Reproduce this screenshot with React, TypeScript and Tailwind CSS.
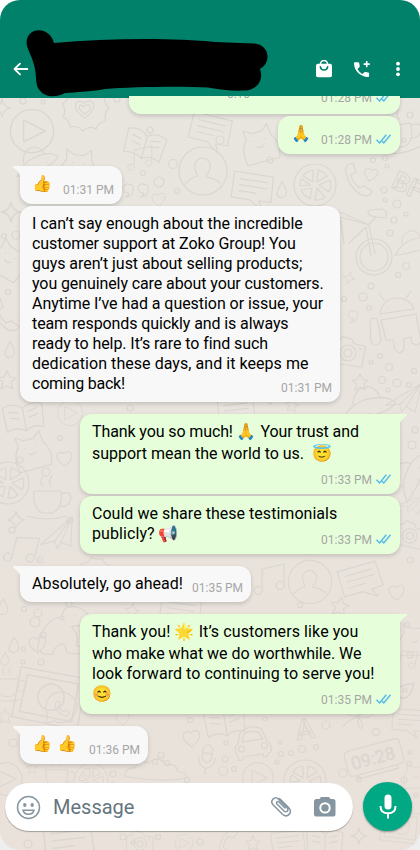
import React from "react";

const LINE = "#dbd6d0";

const bubbles: [number, number, number][] = [
  [23, 101, 3], [43, 102, 2], [117, 99, 3], [16, 235, 4], [4, 236, 2.5], [8, 292, 2.5], [143, 173, 2.5],
  [173, 164, 4.5], [159, 182, 5], [177, 191, 2.5], [410, 115, 3], [404, 140, 2], [373, 160, 2.5],
  [385, 158, 2.5], [387, 166, 2], [384, 190, 3], [385, 200, 2], [397, 204, 4], [394, 220, 3], [406, 214, 2],
  [390, 233, 3], [406, 266, 3.5], [398, 275, 2.5], [371, 286, 3], [363, 297, 4], [344, 299, 2.5], [369, 308, 2.5],
  [380, 356, 2.5], [371, 362, 2], [389, 367, 3.5], [414, 371, 2.5], [382, 380, 3.5], [397, 383, 4], [409, 385, 2.5],
  [388, 390, 2], [20, 460, 3], [46, 472, 4], [60, 438, 2.5], [12, 530, 3], [70, 520, 3], [40, 560, 2.5],
  [35, 622, 5], [24, 609, 2.5], [38, 613, 4], [43, 635, 3], [23, 649, 2], [23, 662, 2], [41, 662, 3], [62, 618, 2],
  [69, 604, 3], [407, 625, 2.5], [410, 655, 3], [405, 690, 2], [13, 743, 4], [113, 774, 3], [113, 784, 2],
  [155, 762, 2.5], [161, 755, 3], [167, 763, 2.5], [187, 780, 2.5], [123, 837, 3], [133, 842, 2], [158, 837, 2.5], [28, 844, 4],
  [200, 842, 3], [404, 780, 3], [416, 795, 2], [190, 720, 2.5], [226, 743, 2], [225, 759, 3], [223, 771, 4.5], [234, 769, 2.5],
  [265, 719, 2], [280, 742, 2], [281, 754, 2.5], [291, 753, 2.5], [302, 749, 3.5], [316, 747, 2.5], [277, 762, 2],
  [326, 725, 4], [376, 732, 3.5], [343, 773, 4], [359, 779, 2.5], [410, 752, 2], [409, 764, 2.5], [270, 402, 2], [130, 408, 3],
  [415, 430, 3], [412, 445, 4], [410, 560, 3], [300, 605, 2.5], [270, 160, 3], [150, 130, 3], [220, 140, 4],
];

type Doodle = [string, number, number, number, number];

const shapes: Record<string, string> = {
  heart: "M0 8C-14 -1 -9 -11 -1 -6C7 -13 13 -3 0 8Z",
  star: "M0 -9L3 -3L9 -2L4 2L6 9L0 6L-6 9L-4 2L-9 -2L-3 -3Z",
  sparkle: "M0 -9Q1 -1 9 0Q1 1 0 9Q-1 1 -9 0Q-1 -1 0 -9Z",
  drop: "M0 -8C4 -2 6 1 4 5C1 9 -4 8 -5 4C-5 1 -3 -3 0 -8Z",
  phone: "M-9 -16C-15 -14 -12 0 -4 9C4 18 13 17 14 11L6 6L1 8Q-6 1 -7 -5L-2 -8L-5 -17Z",
  quote: "M3 -6A5 5 0 1 0 2 3Q2 6 -2 8Q8 7 7 -3Q6 -7 3 -6Z",
  robot: "M-18 -9Q-16 -24 -2 -25Q12 -25 16 -14ZM-14 -23L-19 -30M8 -25L13 -32M-17 -3L18 -9L23 18Q20 25 14 20L13 14L6 16L6 27Q1 32 -3 27L-5 17L-12 17ZM-28 -2Q-24 -8 -20 -2L-17 18Q-22 26 -27 19ZM-10 -16h.5M5 -19h.5",
  camera: "M-16 -9L-9 -11L-7 -15L3 -13L5 -9L17 -7L15 14L-17 12ZM-8 1a8 8 0 1 0 16 0a8 8 0 1 0 -16 0M-4 1a4 4 0 1 0 8 0a4 4 0 1 0 -8 0M11 -4h2",
  wheel: "M-18 0a18 18 0 1 0 36 0a18 18 0 1 0 -36 0M-14 0a14 14 0 1 0 28 0a14 14 0 1 0 -28 0M-3 -1L-8 -30L-25 -14M1 -3L-5 -32L-34 -45M-8 -33L-34 -40L-30 -14M-6 -32L2 -40L12 -39Q14 -47 7 -48L-5 -47Q-9 -42 2 -40",
  person: "M-24 0a24 24 0 1 0 48 0a24 24 0 1 0 -48 0M-18 13Q-10 5 -5 5Q-9 -1 -8 -7Q-5 -15 3 -12Q10 -8 6 0Q3 5 3 6Q12 7 17 12",
  chat: "M-16 6a17 17 0 1 1 7 7L-18 16ZM-7 -7Q-10 0 0 6Q7 11 8 4L4 1L1 3L-4 -2L-2 -5L-4 -9Z",
  cloud: "M-34 10Q-34 0 -23 1Q-19 -10 -9 -4Q2 -14 9 -2Q20 -5 22 5Q30 5 32 11Q10 17 -34 10Z",
  cup: "M-14 -9L13 -9Q15 9 4 13L-6 13Q-16 7 -14 -9ZM13 -6Q25 -10 22 1Q19 8 11 6M-21 16Q0 22 18 16M-5 -14Q-10 -19 -4 -24M3 -14Q-1 -19 4 -24",
  frame: "M-27 -22L28 -17L24 26L-31 20ZM-21 -16L22 -12L19 20L-25 15ZM-11 1a11 11 0 1 0 22 0a11 11 0 1 0 -22 0",
  dino: "M-26 18Q-22 -10 -4 -12Q-2 -25 12 -20Q24 -16 18 -5L5 -3Q13 5 9 14L18 17L16 22L1 21L-1 13Q-10 12 -12 22L-20 22ZM8 -14h.5",
  note: "M-11 12V-10L11 -15V7M-11 12a4 4 0 1 1 -2 -4M11 7a4 4 0 1 1 -2 -4",
  slice: "M-21 0a21 21 0 1 0 42 0a21 21 0 1 0 -42 0M-2 -3L-12 -9Q-7 -15 -2 -15ZM2 -3L3 -15Q8 -14 12 -9ZM4 0L15 -5Q17 2 14 7ZM2 3L10 12Q5 16 0 15ZM-3 3L-5 14Q-12 10 -14 5ZM-5 0L-15 1Q-15 -4 -13 -6Z",
  play: "M-18 0a18 18 0 1 0 36 0a18 18 0 1 0 -36 0M-7 -9L11 0L-7 9Z",
  mic: "M-5 -9Q0 -17 5 -9V2Q0 9 -5 2ZM-9 0Q-8 11 0 12Q8 11 9 0M0 12V18M-5 -4H5",
  letter: "M-21 -12L18 -16L22 9L10 11L15 19L1 12L-18 14ZM-14 -6L13 -9M-13 0L14 -3M-12 6L5 4",
  plane: "M-25 1L24 -18L10 16L0 7L-7 13L-7 3ZM-7 3L24 -18L0 7",
  saucer: "M-25 6Q-12 -5 0 -5Q20 -5 26 5Q12 15 -25 6ZM-12 -4Q-8 -18 5 -16Q13 -13 13 -3M-13 6h.5M0 8h.5M12 6h.5",
  book: "M-20 -12Q-9 -17 0 -9Q10 -16 20 -10L18 13Q8 8 0 14Q-9 8 -19 12ZM0 -9V14M-14 -7L-5 -5M-14 -1L-5 1M5 -5L14 -7M5 1L14 -1",
  cat: "M-17 17Q-20 0 -12 -8L-13 -18L-5 -13L5 -13L12 -19L13 -8Q21 3 16 17ZM-6 -5h.5M6 -5h.5M-3 1Q0 4 3 1",
  badge: "M-3 -24Q4 -20 10 -23Q13 -15 20 -15Q18 -7 24 -2Q18 4 21 11Q13 12 11 19Q4 15 -2 21Q-7 15 -15 17Q-15 10 -22 7Q-18 0 -23 -6Q-16 -10 -16 -17Q-8 -16 -3 -24ZM0 8C-16 -2 -9 -13 -1 -7C8 -14 15 -3 0 8ZM0 4C-9 -2 -6 -8 -1 -3C5 -9 9 -2 0 4Z",
  car: "M-16 11Q-20 3 -14 -1L-11 -11Q-8 -15 0 -16Q9 -16 11 -12L15 -1Q20 3 18 11L15 12L14 15H10V12L-10 13L-11 16H-15V12ZM-10 -2L-7 -10Q0 -13 8 -10L11 -3ZM-14 5a3 3 0 1 0 6 0a3 3 0 1 0 -6 0M9 4a3 3 0 1 0 6 0a3 3 0 1 0 -6 0",
  clock: "M-25 -13H25Q30 -13 30 -8V9Q30 14 25 14H-25Q-30 14 -30 9V-8Q-30 -13 -25 -13ZM-22 14V18H22V14",
  clover: "M0 0C-20 -2 -13 -16 0 0C-3 -18 12 -18 0 0C17 -12 21 3 0 0C11 13 -2 17 0 0Q-8 2 -15 9",
};

const doodles: Doodle[] = [
  ["sparkle", 2, 108, 0, 1], ["play", 32, 131, 0, 1.2], ["badge", 85, 110, 0, 1], ["cup", 399, 134, -10, 1],
  ["letter", 210, 130, 20, 1], ["cat", 260, 145, -15, 1], ["book", 145, 145, 15, 1], ["saucer", 35, 162, -25, 0.9], ["cat", 78, 168, 5, 1],
  ["sparkle", 11, 212, 0, 1.1], ["quote", 127, 190, 0, 0.9], ["quote", 142, 190, 0, 0.9],
  ["heart", 159, 200, 0, 0.8], ["person", 203, 171, 0, 1], ["note", 143, 158, 0, 0.8], ["letter", 252, 188, 15, 1],
  ["drop", 282, 190, 0, 1], ["slice", 315, 185, 0, 1], ["phone", 358, 180, 0, 1], ["heart", 371, 175, 15, 0.8],
  ["wheel", 374, 257, 0, 1], ["saucer", 412, 244, -20, 0.8], ["sparkle", 349, 278, 15, 0.7], ["robot", 398, 323, 0, 1],
  ["quote", 352, 316, 0, 0.8], ["camera", 348, 352, 5, 1], ["star", 360, 382, 0, 0.9],
  ["saucer", 367, 405, -15, 1.1], ["plane", 405, 401, -10, 0.8], ["cat", 8, 260, 30, 1], ["phone", 5, 315, 0, 1],
  ["drop", 10, 350, 0, 1], ["star", 7, 380, 0, 1], ["book", 24, 417, -10, 1], ["letter", 236, 411, 0, 0.9],
  ["star", 292, 405, 10, 0.7], ["play", 70, 413, 0, 0.7], ["cat", 32, 452, -15, 1], ["heart", 65, 459, 0, 0.9],
  ["slice", 8, 483, 0, 1], ["cup", 48, 500, 0, 1], ["sparkle", 16, 520, 0, 1], ["plane", 59, 537, -20, 0.8],
  ["note", 25, 550, 15, 1], ["badge", 94, 577, 0, 0.8], ["saucer", 410, 477, -70, 1], ["camera", 410, 535, 10, 0.9],
  ["plane", 412, 505, 0, 0.6], ["note", 273, 579, 0, 1], ["person", 310, 582, 0, 0.9], ["letter", 360, 580, -10, 1],
  ["heart", 397, 593, 0, 0.9], ["drop", 3, 607, 0, 1], ["dino", 66, 630, 0, 1.1], ["heart", 38, 645, 0, 1],
  ["drop", 14, 645, 0, 1], ["drop", 5, 659, 0, 0.8], ["star", 132, 611, 10, 0.8], ["letter", 180, 611, 15, 1],
  ["star", 340, 606, 10, 1], ["cat", 415, 640, 0, 0.9], ["note", 408, 660, 15, 0.7], ["drop", 406, 690, 50, 1.3],
  ["frame", 51, 696, 5, 1.2], ["cup", 8, 686, 0, 0.8], ["chat", 62, 709, 0, 0.9], ["star", 5, 716, 0, 0.8],
  ["heart", 123, 719, 0, 0.8], ["play", 6, 779, 0, 0.9], ["star", 32, 768, 0, 0.6], ["cup", 57, 777, 0, 0.8],
  ["slice", 91, 780, 0, 0.8], ["cloud", 157, 767, 0, 0.95], ["heart", 192, 739, 0, 1], ["mic", 207, 757, 8, 0.95],
  ["book", 225, 722, -10, 1], ["play", 258, 778, 0, 0.85], ["slice", 305, 781, 0, 1],
  ["car", 252, 743, -6, 1], ["clock", 374, 757, -15, 0.95], ["clover", 358, 717, 0, 1], ["letter", 408, 721, 10, 0.8],
  ["frame", 402, 826, 0, 0.7], ["letter", 68, 841, 0, 1.2], ["camera", 140, 843, 0, 0.8],
  ["play", 184, 843, 0, 0.5], ["phone", 228, 843, 60, 0.8], ["letter", 288, 843, 0, 0.8], ["book", 325, 842, 0, 0.9],
  ["sparkle", 359, 836, 0, 0.9], ["star", 253, 843, 0, 0.8], ["cat", 416, 776, 0, 0.7],
];

function Wallpaper() {
  return (
    <svg className="absolute inset-0 h-full w-full" viewBox="0 0 420 850" fill="none" stroke={LINE} strokeWidth="1.2" strokeLinecap="round" strokeLinejoin="round">
      {bubbles.map(([x, y, r], i) => (
        <circle key={i} cx={x} cy={y} r={r} />
      ))}
      {doodles.map(([name, x, y, a, s], i) => (
        <path key={i} d={shapes[name]} transform={`translate(${x} ${y}) rotate(${a}) scale(${s})`} />
      ))}
      <g className="font-['Roboto',sans-serif]" strokeWidth="1">
        <text className="font-bold" x="390" y="187" fontSize="26" transform="rotate(25 390 187)">BF</text>
        <text className="font-bold" x="297" y="740" fontSize="28" transform="rotate(-8 297 740)">A</text>
        <text x="353" y="770" fontSize="18" strokeWidth="0.5" fill={LINE} transform="rotate(-15 353 770)">09:28</text>
      </g>
    </svg>
  );
}

function Ticks() {
  return (
    <svg className="mb-[4px] ml-[4px] h-[10px] w-[15px]" viewBox="0 0 15 10" fill="none" stroke="#53b9ea" strokeWidth="1.4">
      <path d="M.5 5.8L3.6 8.9L10.3 .8M6.1 7.2L7.8 8.9L14.5 .8" />
    </svg>
  );
}

function Time({ children, read }: { children: string; read?: boolean }) {
  return (
    <span className="flex shrink-0 items-end whitespace-pre text-[12px] leading-[16px] text-[#a6a6a6]">
      {children}
      {read && <Ticks />}
    </span>
  );
}

function Bubble({ mine, tail, className, children }: { mine?: boolean; tail?: boolean; className: string; children: React.ReactNode }) {
  const side = mine ? "self-end bg-[#e6ffda]" : "self-start bg-[#f8f8f8]";
  const corner = tail ? (mine ? "rounded-tr-none" : "rounded-tl-none") : "";
  return (
    <div className={`relative flex shrink-0 rounded-xl px-3 shadow-[0_2px_4px_rgba(0,0,0,0.16)] ${side} ${corner} ${className}`}>
      {tail && (
        <svg className={`absolute top-0 h-[12px] w-[8px] ${mine ? "-right-[7px] -scale-x-100" : "-left-[7px]"}`} viewBox="0 0 8 12" fill={mine ? "#e6ffda" : "#f8f8f8"}>
          <path d="M1 0H8V11C6 6 3 4 .3 1.5Q-.4 .3 1 0Z" />
        </svg>
      )}
      {children}
    </div>
  );
}

function Lines({ rows }: { rows: [string, boolean?, string?][] }) {
  return (
    <div className="flex-1 self-start whitespace-pre pt-2 text-[16px] leading-[20px] text-black">
      {rows.map(([t, tall, tracking]) => (
        <p key={t} className={`${tall ? "h-[22px]" : "h-[20px]"} ${tracking ?? ""}`}>{t}</p>
      ))}
    </div>
  );
}

export default function App() {
  return (
    <div className="h-[850px] w-[420px] bg-linear-to-b from-white to-[#eeeeee] font-['Roboto','Noto_Color_Emoji',sans-serif]">
      <div className="relative flex h-[850px] w-[420px] flex-col overflow-hidden rounded-[20px] bg-linear-to-b from-[#e8e6e0] to-[#e9e1da]">
        <Wallpaper />
        <header className="relative flex h-[98px] shrink-0 items-end bg-[#02816a] text-white">
          <svg className="mb-[19px] ml-[12px] h-5 w-5" viewBox="0 0 20 20" fill="none" stroke="white" strokeWidth="1.8" strokeLinecap="round" strokeLinejoin="round">
            <path d="M15.3 10H2.5M8 4.7L2.5 10L8 15.3" />
          </svg>
          <svg className="absolute left-0 top-0 h-[98px] w-[280px]" viewBox="0 0 280 98">
            <path d="M26.5 43C26.5 26 50 26 54 43C110 38 175 38 215 42L254 43.5C268 44 273 61 260 69C264 80 257 90 245 90.500C232 91 220 90 208 87.500C180 86 130 87 105 89C90 92 75 92 65 93C55 98 44 98 38 88C35 82 37 75 34 65C32 56 27 49 26.500 43Z" fill="black" />
          </svg>
          <div className="mb-[19px] ml-auto flex items-center">
            <svg className="mr-[19px] h-[18px] w-[18px]" viewBox="0 0 18 18">
              <path d="M5.500 5V4A3.500 3.500 0 0 1 12.500 4V5" fill="none" stroke="white" strokeWidth="1.600" />
              <path d="M3 3.800H15Q17 3.800 17 5.800V15.500Q17 17.300 15 17.300H3Q1 17.300 1 15.500V5.800Q1 3.800 3 3.800Z" fill="white" />
              <path d="M5.400 6.800Q6 10 9 10T12.600 6.800" fill="none" stroke="#02816a" strokeWidth="1.600" strokeLinecap="round" />
            </svg>
            <svg className="mr-[16px] h-[20px] w-[20px]" viewBox="0 0 20 20">
              <path d="M3 3.200H6.200Q7 3.200 7.200 4L7.700 7Q7.800 7.700 7.300 8.200L5.400 10Q7.300 13.500 10.400 15.100L12.300 13.200Q12.800 12.800 13.400 12.900L16.300 13.600Q17.100 13.800 17.100 14.600V17Q17.100 18 16.100 18C8.200 18 2 11.500 2 4.300Q2 3.200 3 3.200Z" fill="white" />
              <path d="M14.700 2V8.200M11.600 5.100H17.800" stroke="white" strokeWidth="1.600" />
            </svg>
            <svg className="mr-[12px] h-[18px] w-5" viewBox="0 0 20 18" fill="white">
              <circle cx="10" cy="3.700" r="1.900" /><circle cx="10" cy="9" r="1.900" /><circle cx="10" cy="14.300" r="1.900" />
            </svg>
          </div>
        </header>

        <main className="relative -mt-[2px] flex h-[686px] shrink-0 flex-col overflow-hidden px-5">
          <Bubble mine className="-mt-5 h-[38px] w-[271px] items-end justify-end pb-[8px] pr-[9px]">
            <span className="mb-[4px] mr-[71px] text-[12px] leading-[16px] text-[#a6a6a6]">0:10</span>
            <Time read>01:28 PM</Time>
          </Bubble>
          <Bubble mine className="mt-[2px] h-[38px] w-[122px] items-end justify-between pb-[6px] pl-[13px] pr-[9px]">
            <Lines rows={[["🙏", true]]} />
            <Time read>01:28 PM</Time>
          </Bubble>
          <Bubble tail className="mt-3 h-[38px] w-[102px] items-end justify-between pb-[6px] pr-2">
            <Lines rows={[["👍", true]]} />
            <Time>01:31 PM</Time>
          </Bubble>
          <Bubble className="mt-[2px] h-[196px] w-[320px] items-end pb-[6px] pr-2">
            <div className="h-full w-0 flex-1">
              <Lines
                rows={[
                  ["I can’t say enough about the incredible", false, "tracking-[-0.03px]"],
                  ["customer support at Zoko Group! You", false, "tracking-[-0.08px]"],
                  ["guys aren’t just about selling products;", false, "tracking-[-0.05px]"],
                  ["you genuinely care about your customers.", false, "tracking-[-0.1px]"],
                  ["Anytime I’ve had a question or issue, your", false, "tracking-[-0.05px]"],
                  ["team responds quickly and is always", false, "tracking-[-0.1px]"],
                  ["ready to help. It’s rare to find such", false, "tracking-[-0.08px]"],
                  ["dedication these days, and it keeps me", false, "tracking-[0.05px]"],
                  ["coming back!", false, "tracking-[-0.22px]"],
                ]}
              />
            </div>
            <Time>01:31 PM</Time>
          </Bubble>
          <Bubble mine tail className="mt-3 h-[80px] w-[320px] items-end pb-[6px] pr-[9px]">
            <div className="h-full w-0 flex-1">
              <Lines rows={[["Thank you so much! 🙏 Your trust and", true, "tracking-[-0.11px]"], ["support mean the world to us.  😇", true, "tracking-[-0.02px]"]]} />
            </div>
            <Time read>01:33 PM</Time>
          </Bubble>
          <Bubble mine className="mt-[2px] h-[58px] w-[320px] items-end pb-[6px] pr-[9px]">
            <div className="h-full w-0 flex-1">
              <Lines rows={[["Could we share these testimonials", false, "tracking-[0.03px]"], ["publicly? 📢", true, "tracking-[0.08px]"]]} />
            </div>
            <Time read>01:33 PM</Time>
          </Bubble>
          <Bubble tail className="mt-3 h-[36px] w-[231px] items-end pb-[6px] pr-2">
            <div className="h-full w-0 flex-1">
              <Lines rows={[["Absolutely, go ahead!"]]} />
            </div>
            <Time>01:35 PM</Time>
          </Bubble>
          <Bubble mine tail className="mt-3 h-[100px] w-[320px] items-end pb-[6px] pr-[9px]">
            <div className="h-full w-0 flex-1">
              <Lines
                rows={[
                  ["Thank you! 🌟 It’s customers like you", true, "tracking-[0.1px]"],
                  ["who make what we do worthwhile. We", false, "tracking-[-0.05px]"],
                  ["look forward to continuing to serve you!", false, "tracking-[0.05px]"],
                  ["😊", true],
                ]}
              />
            </div>
            <Time read>01:35 PM</Time>
          </Bubble>
          <Bubble tail className="mt-3 h-[38px] w-[128px] items-end pb-[6px] pr-2">
            <Lines rows={[["👍 👍", true, "tracking-[0.5px]"]]} />
            <Time>01:36 PM</Time>
          </Bubble>
        </main>

        <footer className="relative flex h-[50px] shrink-0 items-start gap-[10px] pl-[5px]">
          <div className="mt-px flex h-12 w-[348px] items-center rounded-full bg-white shadow-[0_1px_1px_rgba(0,0,0,0.3)]">
            <svg className="ml-[11px] h-[25px] w-[25px]" viewBox="0 0 25 25" fill="none" stroke="#8696a0" strokeWidth="1.500">
              <circle cx="12.500" cy="12.500" r="11" />
              <path d="M7 15.200H18Q17 19.200 12.500 19.200T7 15.200Z" />
              <ellipse cx="8.800" cy="10" rx="1.700" ry="2" fill="#8696a0" stroke="none" />
              <ellipse cx="16.200" cy="10" rx="1.700" ry="2" fill="#8696a0" stroke="none" />
            </svg>
            <span className="ml-3 flex-1 text-[20px] leading-6 text-[#65757e]">Message</span>
            <svg className="mr-[21px] h-[22px] w-[22px]" viewBox="0 0 22 22" fill="none" stroke="#8696a0" strokeWidth="1.500" strokeLinecap="round">
              <path d="M9.500 2.500L18.800 11.800C23 16.500 17.500 22.500 12.500 18.200L3 8.700C-.5 4.800 4.800 -.5 8.600 3.200L17 11.600C19.300 14.300 16.500 17.100 14 15L7 8C5.700 6.500 7.600 4.700 9 6L15 12" />
            </svg>
            <svg className="mr-[16px] h-[22px] w-[24px]" viewBox="0 0 24 22" fill="#8696a0">
              <path fillRule="evenodd" d="M8 1H16L17.500 3H20Q22.500 3 22.500 5.500V18.500Q22.500 20.500 20.500 20.500H3Q1 20.500 1 18.500V5.500Q1 3 3.500 3H6.500ZM12 6.200A5.700 5.700 0 1 0 12 17.600A5.700 5.700 0 1 0 12 6.200Z" />
              <circle cx="12" cy="11.900" r="3.700" />
            </svg>
          </div>
          <div className="flex h-[49px] w-[49px] items-center justify-center rounded-full bg-[#00a884] shadow-[0_1px_2px_rgba(0,0,0,0.35)]">
            <svg className="h-[26px] w-5" viewBox="0 0 20 26" fill="none" stroke="white">
              <path d="M10 4V12" strokeWidth="7" strokeLinecap="round" />
              <path d="M2.500 12Q2.500 19.300 10 19.300T17.500 12M10 19V24.500" strokeWidth="2" />
            </svg>
          </div>
        </footer>
      </div>
    </div>
  );
}
